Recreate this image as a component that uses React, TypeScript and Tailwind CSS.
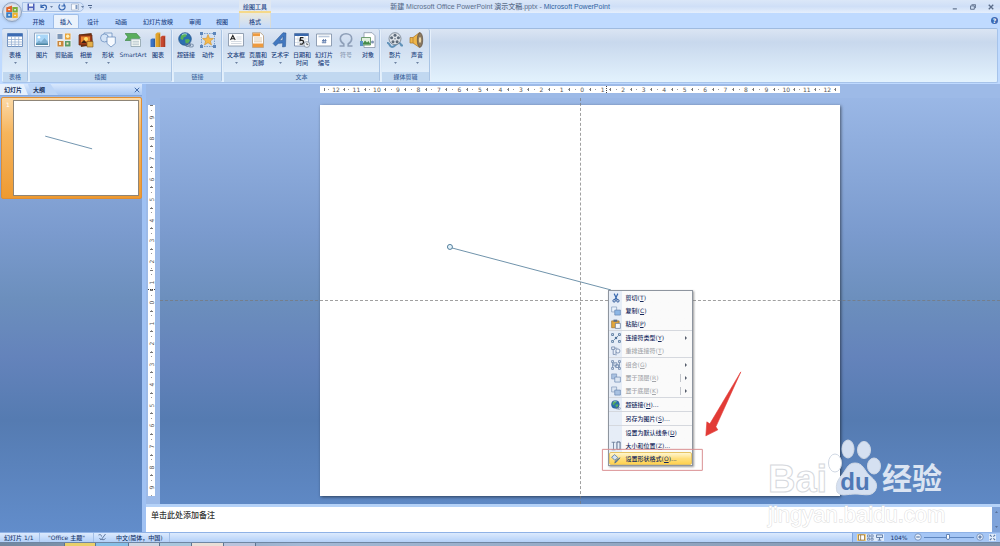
import type { ReactNode } from "react"

type Tool = { label: string; sub?: string; icon: ReactNode; arrow?: boolean; wide?: boolean; disabled?: boolean }
type ToolGroup = { name: string; pad: string; tools: Tool[] }
type MenuEntry = { label: string; hotkey: string; dots?: boolean; icon?: ReactNode; sub?: boolean; split?: boolean; disabled?: boolean; active?: boolean; line?: boolean }

const Icon = ({ children, size = "size-4" }: { children: ReactNode; size?: string }) => (
    <svg viewBox="0 0 16 16" className={`${size} shrink-0`} fill="none" aria-hidden="true">{children}</svg>
)

const Caret = () => (
    <svg viewBox="0 0 4 2" className="h-0.5 w-[3px]" aria-hidden="true"><path d="M0 0h4L2 2Z" fill="#4a6187" /></svg>
)

const globe = (
    <>
        <circle cx="7" cy="7" r="6.3" fill="#2b6fb0" stroke="#1f4f86" strokeWidth=".7" />
        <path d="M3 3.5 6 1.6l3 .6-1 2.2-2.4 1L5 8 2.4 7ZM7 7.5l3.5-.6 1.5 1.6-2.4 3.4-2-1Z" fill="#58b158" />
        <path d="M4 3c1.5-1.4 3.6-1.4 5-.8" stroke="#bfe3f7" strokeWidth=".8" />
        <ellipse cx="10" cy="12.7" rx="2.4" ry="1.5" stroke="#55708f" strokeWidth="1.1" />
        <ellipse cx="13" cy="13.5" rx="2.3" ry="1.5" stroke="#8296b0" strokeWidth="1.1" />
    </>
)

const groups: ToolGroup[] = [
    {
        name: "表格",
        pad: "px-px",
        tools: [
            {
                label: "表格", arrow: true,
                icon: <Icon><path d="M.5 1.5h15v13H.5Z" fill="#fff" stroke="#7393c0" /><path d="M.5 1.5h15v3H.5Z" fill="#3c6cb4" /><path d="M4.5 4.5v10M8 4.5v10M11.7 4.5v10M.5 7.5h15M.5 10h15M.5 12.3h15" stroke="#9bb2d3" strokeWidth=".8" /></Icon>,
            },
        ],
    },
    {
        name: "插图",
        pad: "pl-px pr-0.5",
        tools: [
            {
                label: "图片",
                icon: <Icon><path d="M.5 1h15v13.5H.5Z" fill="#f8fbff" stroke="#93a9c4" /><path d="M2 2.5h12V13H2Z" fill="#a9d6f7" /><circle cx="5" cy="5.3" r="1.3" fill="#fff" /><path d="m2 11 3-2.5 2 1.5 3.5-4L14 10v3H2Z" fill="#7fb0d2" /><path d="M2 11.5h12V13H2Z" fill="#4c85a0" /></Icon>,
            },
            {
                label: "剪贴画",
                icon: <Icon><path d="M.5.8h15v14.4H.5Z" fill="#e6eaf0" /><path d="M1.5 2h5v5h-5Z" fill="#7d97b7" /><path d="M9 1.5h5.5v6H9Z" fill="#e9a33b" /><circle cx="11.7" cy="4.2" r="1.7" fill="#fff1b8" /><path d="M1.5 9h6v5.5h-6Z" fill="#c9863d" /><path d="M9 9h5.5v5.5H9Z" fill="#5a9b6b" /><path d="M3 10h2v3H3ZM10.5 10.5h2v2h-2Z" fill="#f7e3c0" /></Icon>,
            },
            {
                label: "相册", arrow: true,
                icon: <Icon><path d="M1 2.5 13.5 1 15 13 3 15Z" fill="#6b3415" /><path d="M1 3h13v10H1Z" fill="#a03c18" stroke="#5b2a12" strokeWidth=".7" /><path d="M3 4.5h9V11H3Z" fill="#e8852d" /><circle cx="8" cy="7" r="2" fill="#ffdf68" /><path d="m3 11 3-3 3 3Z" fill="#3d2013" /><path d="M9 9.5h6v5.5H9Z" fill="#e4b04a" stroke="#79501e" strokeWidth=".6" /></Icon>,
            },
            {
                label: "形状", arrow: true,
                icon: <Icon><path d="M4 1h8v7H4Z" fill="#e5effa" stroke="#6d90bf" strokeWidth=".8" /><circle cx="4.5" cy="6" r="4" fill="#d3e3f6" stroke="#6d90bf" strokeWidth=".8" /><path d="M7 5h8.3v6.5L11 15 7 11.5Z" fill="#f5f9fe" stroke="#6d90bf" strokeWidth=".8" /></Icon>,
            },
            {
                label: "SmartArt", wide: true,
                icon: <Icon><path d="M0 1.5h11.5L15 5.5l-2 3H0l3-3.5Z" fill="#59ad5d" stroke="#347d3d" strokeWidth=".6" /><path d="M6 7h9.5v7.5H6Z" fill="#f7fbf7" stroke="#8ca0a9" strokeWidth=".8" /><path d="M7.5 9.3h6.5M7.5 11h6.5M7.5 12.7h6.5" stroke="#a2b5bf" strokeWidth=".7" /></Icon>,
            },
            {
                label: "图表",
                icon: <Icon><path d="M.5 7.5 2 6.5h3V15H.5Z" fill="#3a72c4" /><path d="m5.5 2 1.8-1.5h3V15H5.5Z" fill="#e3a42c" /><path d="m10.5 5 1.8-1.2h3V15h-4.8Z" fill="#c8482f" /><path d="M4.3 7v8M9.3 2v13M14.3 5v10" stroke="#0003" strokeWidth="1.2" /></Icon>,
            },
        ],
    },
    {
        name: "链接",
        pad: "pl-px pr-0.5",
        tools: [
            { label: "超链接", icon: <Icon>{globe}</Icon> },
            {
                label: "动作",
                icon: <Icon><path d="M1.5 1.5h13v13h-13Z" stroke="#7ba0cf" strokeDasharray="1.5 1" /><path d="m8 2.5 1.5 3.8 4 .2-3.1 2.5 1.1 4L8 10.7 4.5 13l1.1-4-3.1-2.5 4-.2Z" fill="#f6b94c" stroke="#c98820" strokeWidth=".5" /><path d="M0 0h3v3H0ZM13 0h3v3h-3ZM0 13h3v3H0ZM13 13h3v3h-3Z" fill="#5d86bb" /></Icon>,
            },
        ],
    },
    {
        name: "文本",
        pad: "pl-px",
        tools: [
            {
                label: "文本框", arrow: true,
                icon: <Icon><path d="M.5 1.5h15v12.5H.5Z" fill="#fdfdfe" stroke="#8a98ac" strokeWidth=".9" /><path d="M8.5 5h5M8.5 7h5M3 9.5h10.5M3 11.5h10.5" stroke="#c2cad6" strokeWidth=".7" /><path d="M2.5 8 4.8 3.5 7.2 8M3.3 6.7h3" stroke="#222" strokeWidth="1.1" /></Icon>,
            },
            {
                label: "页眉和", sub: "页脚",
                icon: <Icon><path d="M2.5.7h8l3 3v11.8h-11Z" fill="#fff" stroke="#b39672" strokeWidth=".8" /><path d="M3 1.2h7v3H3ZM3 11.5h10V15H3Z" fill="#ee9a3e" /><path d="M4 6h8M4 8h8M4 9.8h8" stroke="#d2b48c" strokeWidth=".7" /></Icon>,
            },
            {
                label: "艺术字", arrow: true,
                icon: <Icon><path d="M1 11.5 11 .7l3 .3-.5 13.500-3 .5.2-4-4.5.4L3.5 14ZM7.5 8.5l3.2-.2.4-4Z" fill="#4278c0" stroke="#24518f" strokeWidth=".5" /></Icon>,
            },
            {
                label: "日期和", sub: "时间",
                icon: <Icon><path d="M.5 1.5h14V14H.5Z" fill="#fff" stroke="#6e82a2" strokeWidth=".8" /><path d="M.5 1.5h14V4H.5Z" fill="#3968ad" /><path d="M1 7h13M1 10.5h13M4 4v10M11 4v10" stroke="#ccd5e2" strokeWidth=".7" /><path d="M9.5 5.7h-3L6 8.5c2.5-.7 4 .3 3.5 2s-2 2-3.8 1.3" stroke="#222" strokeWidth="1.3" /><circle cx="12.8" cy="12.5" r="2.9" fill="#edf1f6" stroke="#7b899b" strokeWidth=".8" /><path d="M12.8 10.8v1.8h1.5" stroke="#333" strokeWidth=".7" /></Icon>,
            },
            {
                label: "幻灯片", sub: "编号",
                icon: <Icon><path d="M.5 2h15v12H.5Z" fill="#fff" stroke="#8796ad" strokeWidth=".9" /><path d="M2.5 3.7h11v1.6h-11Z" fill="#bac8dc" /><path d="M7.5 7 7 11.5M9.5 7 9 11.500M6 8.500h4.500M5.800 10.200h4.500" stroke="#5f7cad" strokeWidth=".9" /></Icon>,
            },
            {
                label: "符号", disabled: true,
                icon: <Icon><path d="M1.5 14h4.3v-2C3.5 10.500 2.300 8.800 2.300 6.700 2.300 3.800 4.700 1.700 8 1.700s5.700 2.100 5.700 5c0 2.100-1.200 3.800-3.500 5.300v2h4.300" stroke="#8e9fb8" strokeWidth="1.600" /></Icon>,
            },
            {
                label: "对象",
                icon: <Icon><path d="M4 .7h8l3 3v11.8H4Z" fill="#fff" stroke="#8896a8" strokeWidth=".8" /><path d="M1.5 5.500h9V13h-9Z" fill="#e2f0df" stroke="#548a56" strokeWidth=".8" /><path d="m2 12.500 3-4 2 2 1.500-1.500 2 3.500Z" fill="#478c4b" /><path d="M0 9h3v5H0Z" fill="#5a94c8" /><circle cx="12.500" cy="10" r="1.500" fill="#7f95b5" /></Icon>,
            },
        ],
    },
    {
        name: "媒体剪辑",
        pad: "pl-0.5 pr-px",
        tools: [
            {
                label: "影片", arrow: true,
                icon: <Icon><path d="M0 11c3-1 2 4 5 4s4-4 7-4 1 4 4 2" stroke="#5f91b8" strokeWidth="2" /><circle cx="8" cy="6.7" r="6" fill="#dde2e8" stroke="#707d8c" strokeWidth=".8" /><circle cx="8" cy="3.2" r="1.5" fill="#5d6b7a" /><circle cx="4.6" cy="5.7" r="1.5" fill="#5d6b7a" /><circle cx="11.4" cy="5.7" r="1.5" fill="#5d6b7a" /><circle cx="6" cy="9.8" r="1.5" fill="#5d6b7a" /><circle cx="10.1" cy="9.8" r="1.5" fill="#5d6b7a" /><circle cx="8" cy="6.8" r=".7" fill="#5d6b7a" /></Icon>,
            },
            {
                label: "声音", arrow: true,
                icon: <Icon><path d="M1 5.5h3L10.5.5v15L4 11H1Z" fill="#eeb64a" stroke="#a8742a" strokeWidth=".7" /><path d="M4 5.5V11" stroke="#a8742a" strokeWidth=".6" /><ellipse cx="11" cy="8" rx="2.7" ry="7.3" fill="#8c7a61" stroke="#5e5040" strokeWidth=".7" /><ellipse cx="11" cy="8" rx="1.2" ry="3" fill="#e9d6a8" /></Icon>,
            },
        ],
    },
]

const boxes = (a: string, b: string) => (
    <Icon size="size-2.5"><path d="M1 1.5h8v8H1Z" fill={a} stroke="#7690b5" /><path d="M6 6.5h9v8H6Z" fill={b} stroke="#5f7fac" /></Icon>
)

const menu: MenuEntry[] = [
    { label: "剪切", hotkey: "T", icon: <Icon size="size-2.5"><path d="M5 1 10 11M11 1 6 11" stroke="#3a6ab0" strokeWidth="1.8" /><circle cx="5" cy="12.5" r="2" stroke="#2c5596" strokeWidth="1.5" /><circle cx="11" cy="12.5" r="2" stroke="#2c5596" strokeWidth="1.5" /></Icon> },
    { label: "复制", hotkey: "C", icon: boxes("#e9f1fb", "#8db7e6") },
    { label: "粘贴", hotkey: "P", line: true, icon: <Icon size="size-2.5"><path d="M1 3h12v11H1Z" fill="#e2a63c" stroke="#94682a" /><path d="M4 1h6v3.5H4Z" fill="#5b6c86" /><path d="M7 7h8v8H7Z" fill="#f4f7fc" stroke="#53698d" /></Icon> },
    { label: "连接符类型", hotkey: "Y", sub: true, icon: <Icon size="size-2.5"><path d="M1 1h3v3H1ZM12 1h3v3h-3ZM1 12h3v3H1ZM12 12h3v3h-3Z" stroke="#4e7097" strokeWidth="1.3" /><path d="m5 11 6-6" stroke="#4e7097" strokeWidth="1.3" /><circle cx="8" cy="8" r="2" fill="#4e7097" /></Icon> },
    { label: "重排连接符", hotkey: "T", disabled: true, line: true, icon: <Icon size="size-2.5"><path d="M1 1.5h5v4H1ZM3.5 5.5v8H7M6 3.5h4" stroke="#7389ab" strokeWidth="1.3" /><circle cx="11" cy="8" r="3.3" fill="#edf3fb" stroke="#7389ab" strokeWidth="1.3" /><path d="M8 9v6" stroke="#7389ab" strokeWidth="1.3" /></Icon> },
    { label: "组合", hotkey: "G", disabled: true, sub: true, icon: <Icon size="size-2.5"><path d="M1 1h3v3H1ZM12 1h3v3h-3ZM1 12h3v3H1ZM12 12h3v3h-3ZM4.5 4.5h5v5h-5ZM7.5 7.5H12V12H7.5ZM2.5 4.5v7M13.5 4.5v7" stroke="#6c86aa" strokeWidth="1.3" /></Icon> },
    { label: "置于顶层", hotkey: "R", disabled: true, sub: true, split: true, icon: boxes("#a9c2e2", "#dbe5f2") },
    { label: "置于底层", hotkey: "K", disabled: true, sub: true, split: true, line: true, icon: boxes("#dbe5f2", "#a9c2e2") },
    { label: "超链接", hotkey: "H", dots: true, line: true, icon: <Icon size="size-2.5">{globe}</Icon> },
    { label: "另存为图片", hotkey: "S", dots: true, line: true },
    { label: "设置为默认线条", hotkey: "D" },
    { label: "大小和位置", hotkey: "Z", dots: true, icon: <Icon size="size-2.5"><path d="M1 2h6M4 2v12M1 14h6" stroke="#5c6f8d" strokeWidth="1.2" /><path d="M9.5 1.5h5v12h-5Z" fill="#e7eef8" stroke="#46597a" strokeWidth="1.4" /></Icon> },
    { label: "设置形状格式", hotkey: "O", dots: true, active: true, icon: <Icon size="size-2.5"><path d="m1 5 5-4 5 5-5 4Z" fill="#d4e3f5" stroke="#56779f" strokeWidth="1.3" /><path d="M14.5 6 9 12.5 6 14.5l1-3.5Z" fill="#6b88ad" stroke="#41608a" /></Icon> },
]

const tabs = [
    { label: "开始", width: "w-[29px]" },
    { label: "插入", width: "w-[26px]", selected: true },
    { label: "设计", width: "w-7" },
    { label: "动画", width: "w-7" },
    { label: "幻灯片放映", width: "w-[46px]" },
    { label: "审阅", width: "w-7" },
    { label: "视图", width: "w-[26px]" },
]

const cmAcross = Array.from({ length: 25 }, (_, i) => Math.abs(i - 12))
const cmDown = Array.from({ length: 19 }, (_, i) => Math.abs(i - 9))

const TitleBar = () => (
    <header className="relative flex h-[13px] items-center bg-linear-to-b from-[#dbe7f8] via-[#cfdff7] to-[#e5effc] text-[#5b6f8c]">
        <button aria-label="Office 按钮" className="absolute top-0.5 left-0.5 z-10 size-5 rounded-full border border-[#8fa3c0] bg-radial from-white via-[#e3e7ee] to-[#a9b6ca] shadow-sm">
            <svg viewBox="0 0 16 16" className="mx-auto size-3.5" fill="none" strokeWidth="2.2">
                <path d="M2.5 3.5 7 2v5H2.5Z" stroke="#e0652b" />
                <path d="M9.5 3.500h4V7.500h-4Z" stroke="#7cae3b" />
                <path d="M2.500 9.500H7v4H2.500Z" stroke="#3c7fc4" />
                <path d="M9.500 10h4v3.500l-4 .5Z" stroke="#efb12e" />
            </svg>
        </button>
        <div className="ml-[22px] flex h-2.5 w-[62px] items-center gap-[5px] rounded-r-full border border-[#a9c2e6] bg-[#d6e4f8] pl-1">
            <button aria-label="保存"><Icon size="size-2"><path d="M1 1h14v14H1Z" fill="#4c5fb8" /><path d="M4 1h8v6H4Z" fill="#f2f5fb" /><path d="M4 10h8v5H4Z" fill="#cdd6ee" /></Icon></button>
            <button aria-label="撤消" className="flex items-center gap-0.5">
                <Icon size="size-2"><path d="M2 3v6h6M2.500 8.500C5 3 13 3 13 9c0 3-2 4.500-4 5" stroke="#3465b0" strokeWidth="2.4" /></Icon>
                <Caret />
            </button>
            <button aria-label="恢复"><Icon size="size-2"><path d="M4 3a6.2 6.2 0 1 0 8 0M12 1v5H7" stroke="#3465b0" strokeWidth="2.2" /></Icon></button>
            <button aria-label="新建幻灯片" className="flex items-center gap-0.5">
                <Icon size="size-2"><path d="M1 2h14v12H1Z" fill="#f8fafd" stroke="#7f93b1" /><path d="M9 4h4v8H9Z" fill="#7d98c0" /></Icon>
                <Caret />
            </button>
        </div>
        <button aria-label="自定义快速访问工具栏" className="ml-1 flex flex-col items-center gap-px">
            <span className="h-px w-1 bg-[#4a6187]" />
            <Caret />
        </button>
        <h1 className="absolute inset-x-0 text-center font-['Liberation_Sans','Noto_Sans_CJK_SC',sans-serif] text-[7px] leading-[13px]">
            新建 Microsoft Office PowerPoint 演示文稿.pptx - <span className="text-[#2f639f]">Microsoft PowerPoint</span>
        </h1>
        <div className="relative ml-auto flex items-center gap-3 pr-1.5">
            <button aria-label="最小化"><Icon size="size-1.5"><path d="M2 13h11" stroke="#5a6c88" strokeWidth="3" /></Icon></button>
            <button aria-label="还原"><Icon size="size-1.5"><path d="M4 2h11v9M1.5 5h10v9h-10Z" stroke="#5a6c88" strokeWidth="2.5" /></Icon></button>
            <button aria-label="关闭"><Icon size="size-1.5"><path d="m2 2 12 12M14 2 2 14" stroke="#5a6c88" strokeWidth="3.5" /></Icon></button>
        </div>
    </header>
)

const TabRow = () => (
    <nav className="flex h-[15px] items-end bg-[#bfdaff] pl-6 text-[#1f4788]">
        {tabs.map((tab) => (
            <button
                key={tab.label}
                className={tab.selected
                    ? `${tab.width} h-3.5 rounded-t-xs border border-b-0 border-[#9ebde8] bg-[#eaf2fc]`
                    : `${tab.width} h-3.5`}
            >
                {tab.label}
            </button>
        ))}
        <div className="relative ml-1 h-full w-8 border-x border-[#d9dcd8] bg-linear-to-b from-[#ece9dc] to-[#c5dbfb]">
            <span className="absolute -top-[13px] -left-px z-10 h-[13px] w-8 border-b-2 border-[#f5d98a] bg-[#e0e8f2] text-center leading-[13px]">绘图工具</span>
            <button className="h-full w-full pt-px">格式</button>
        </div>
        <button aria-label="帮助" className="mr-0.5 mb-1 ml-auto flex size-[7px] items-center justify-center rounded-full bg-[#3a68b4] text-[6px] font-bold text-white">?</button>
    </nav>
)

const Ribbon = () => (
    <section className="mx-0.5 flex h-[55px] gap-0.5 rounded-xs border border-l-0 border-[#a6c3ea] border-t-[#9fbbe0] bg-linear-to-b from-[#dbe5f3] from-0% via-[#c8d8ed] via-25% to-[#e3f2fd] pl-px text-[#1f4480]">
        {groups.map((group) => (
            <div key={group.name} className="flex flex-col justify-between rounded-xs border-r border-[#a9c4e4] bg-white/10 shadow-[1px_0_0_#e6f0fb]">
                <div className={`flex ${group.pad}`}>
                    {group.tools.map((tool) => (
                        <button
                            key={tool.label}
                            disabled={tool.disabled}
                            className={`${tool.wide ? "w-7" : "w-[22px]"} flex flex-col items-center pt-[3px] whitespace-nowrap disabled:text-[#8c9cb4]`}
                        >
                            {tool.icon}
                            <span className="mt-0.5 leading-[9px]">{tool.label}</span>
                            {tool.sub && <span className="leading-[8px]">{tool.sub}</span>}
                            {tool.arrow && <span className="mt-[3px]"><Caret /></span>}
                        </button>
                    ))}
                </div>
                <h2 className="h-2.5 bg-[#c1d8f0] text-center leading-[10px] font-medium text-[#44699f]">{group.name}</h2>
            </div>
        ))}
    </section>
)

const SlidesPane = () => (
    <aside className="flex w-[142px] shrink-0 flex-col">
        <div className="flex h-3 items-stretch border-b border-[#86a8dc] bg-linear-to-b from-[#d9e8fc] to-[#a9c8f4] text-[#16305c]">
            <button className="w-7 bg-[#e6f0fd] pl-1 text-left font-bold whitespace-nowrap [clip-path:polygon(0_0,84%_0,100%_100%,0_100%)]">幻灯片</button>
            <button className="w-[30px] bg-[#bcd5f7] pr-2 font-bold [clip-path:polygon(0_0,75%_0,100%_100%,12%_100%)]">大纲</button>
            <button aria-label="关闭窗格" className="mr-0.5 ml-auto"><Icon size="size-1.5"><path d="m2 2 12 12M14 2 2 14" stroke="#3e68a8" strokeWidth="2.5" /></Icon></button>
        </div>
        <button className="mt-px ml-px flex gap-0.5 rounded-xs border border-[#e08f33] bg-linear-to-b from-[#fbd9a6] from-0% via-[#f6b55c] via-35% to-[#ee9a30] p-0.5 text-left text-white">
            <span className="w-[7px] pl-0.5">1</span>
            <svg viewBox="0 0 127 96" className="flex-1 border border-[#8f8577] bg-white">
                <path d="m32 36 48 13" stroke="#6f93ae" />
            </svg>
        </button>
    </aside>
)

const HorizontalRuler = () => (
    <div className="relative mx-auto flex h-[7px] w-[62%] items-center bg-white px-1 text-[6px] leading-[7px] text-[#555]">
        {cmAcross.map((n, i) => (
            <div key={i} className="flex w-0 flex-1 items-center justify-between">
                <span className="h-[3px] w-px bg-[#777]" />
                <span className="size-px bg-[#999]" />
                <span>{n}</span>
                <span className="size-px bg-[#999]" />
            </div>
        ))}
        <span className="h-[3px] w-px bg-[#777]" />
        <span className="absolute left-[55%] h-full w-px border-l border-dotted border-[#444]" />
    </div>
)

const VerticalRuler = () => (
    <div className="flex w-3.5 shrink-0 flex-col bg-[#9cbae8] pt-[7px] pb-2 pl-0.5">
        <div className="relative flex w-[7px] flex-1 flex-col items-center bg-white text-[6px] leading-[7px] text-[#555]">
            {cmDown.map((n, i) => (
                <div key={i} className="flex h-0 flex-1 flex-col items-center justify-between">
                    <span className="h-px w-[3px] bg-[#777]" />
                    <span className="size-px bg-[#999]" />
                    <span className="-rotate-90">{n}</span>
                    <span className="size-px bg-[#999]" />
                </div>
            ))}
            <span className="absolute top-[47%] h-px w-full border-t border-dotted border-[#444]" />
        </div>
    </div>
)

const ContextMenu = () => (
    <ul role="menu" className="absolute top-[185px] left-[288px] w-[85px] border border-[#8e959f] bg-linear-to-r from-[#e6edf7] from-[13px] to-[#fafafa] to-[13px] font-medium text-[#14285c] shadow-[1px_1px_2px_#0006]">
        {menu.map((entry) => (
            <li key={entry.label} role="none" className={entry.line ? "border-b border-[#d5d8de]" : ""}>
                <button
                    role="menuitem"
                    disabled={entry.disabled}
                    className={`flex h-[13px] w-full items-center whitespace-nowrap disabled:text-[#a3a6ab] ${entry.active ? "rounded-xs border border-[#e5c365] bg-linear-to-b from-[#fff6cf] via-[#ffdf7c] to-[#ffd24f] pl-px" : "pl-0.5"}`}
                >
                    <span className="w-[15px]">{entry.icon}</span>
                    <span>{entry.label}(<u>{entry.hotkey}</u>){entry.dots && "..."}</span>
                    {entry.sub && (
                        <span className={`ml-auto flex h-2 items-center pr-[5px] ${entry.split ? "border-l border-[#c3c6cc] pl-1" : ""}`}>
                            <svg viewBox="0 0 2 4" className="h-1 w-0.5"><path d="M0 0v4l2-2Z" fill="#555c6b" /></svg>
                        </span>
                    )}
                </button>
            </li>
        ))}
    </ul>
)

const Watermark = () => (
    <div className="pointer-events-none absolute right-[54px] bottom-2 z-10 flex h-[58px] w-[178px] items-end font-['Liberation_Sans','Noto_Sans_CJK_SC',sans-serif] font-bold text-[#dbe4f2]">
        <span className="w-[60px] text-[38px] leading-[34px] text-white [-webkit-text-stroke:1px_#d5d8dd]">Bai</span>
        <div className="relative h-[58px] w-[54px]">
            <svg viewBox="0 0 54 58" className="absolute inset-0" fill="#d5e0f1" stroke="#d0d8e4">
                <ellipse cx="7" cy="25" rx="6.5" ry="9" fill="#fff" />
                <ellipse cx="20" cy="11" rx="6" ry="9" />
                <ellipse cx="36" cy="12" rx="6.5" ry="8.5" />
                <ellipse cx="46" cy="28" rx="6.5" ry="8" />
                <path d="M27 25c8 0 9 7 14 12 6 5 10 9 6 16-4 6-12 3-20 3s-14 3-18-2c-2-8 1-12 4-16 5-5 6-13 14-13Z" />
            </svg>
            <span className="absolute inset-x-0 bottom-0 text-center text-[24px] leading-[28px] text-[#4f78b5]">du</span>
        </div>
        <span className="text-[30px] leading-[34px] whitespace-nowrap">经验</span>
    </div>
)

const Slide = () => (
    <div className="relative aspect-4/3 w-[62%] bg-white shadow-[1px_1px_3px_#0008]">
        <svg viewBox="0 0 521 391" className="absolute inset-0" fill="none">
            <path d="m132 143 159 42" stroke="#6f93ab" />
            <circle cx="130" cy="142" r="2.5" fill="#e4f3fb" stroke="#527d9b" />
        </svg>
        <ContextMenu />
        <svg viewBox="0 0 521 391" className="pointer-events-none absolute inset-0" fill="none">
            <path d="m421 267-25 55 2 3-12 6 1-14 3 2Z" fill="#e23b36" stroke="#e23b36" strokeWidth=".6" />
            <path d="M282.500 344.500h100v21h-100Z" stroke="#d98f92" />
        </svg>
    </div>
)

const Editor = () => (
    <div className="flex min-w-0 flex-1 flex-col border-l-4 border-[#9fc1f3]">
        <div className="h-3.5 bg-[#9dbae7] pt-0.5 pl-3.5"><HorizontalRuler /></div>
        <div className="relative flex flex-1">
            <VerticalRuler />
            <div className="relative flex flex-1 items-start justify-center pt-[7px] pb-2">
                <Slide />
                <span className="pointer-events-none absolute inset-y-0 left-1/2 border-l border-dashed border-[#777]/70" />
                <span className="pointer-events-none absolute top-[202px] left-0 w-[448px] border-t border-dashed border-[#777]/70" />
                <span className="pointer-events-none absolute top-[202px] right-0 left-[533px] border-t border-dashed border-[#777]/70" />
            </div>
            <Watermark />
        </div>
        <div className="relative flex h-7 border-t-3 border-[#b5d2f8]">
            <textarea aria-label="备注" defaultValue="单击此处添加备注" className="flex-1 resize-none overflow-hidden bg-white px-[5px] pt-[3px] text-[8px] leading-[12px] text-[#333] outline-none" />
            <div className="flex w-2 flex-col items-center justify-between bg-[#7fa3da] py-1">
                <span className="rotate-180 leading-none"><Caret /></span>
                <Caret />
            </div>
            <span className="pointer-events-none absolute -top-1 right-[54px] w-[178px] font-['Liberation_Sans',sans-serif] text-[22px] leading-6 text-white [-webkit-text-stroke:1px_#dcdcdc] [paint-order:stroke]">jingyan.baidu.com</span>
        </div>
    </div>
)

const StatusBar = () => (
    <footer className="flex h-2.5 items-center border-t border-[#8fb2e6] bg-linear-to-b from-[#dceafd] to-[#b3d0f8] text-[#16356a]">
        <span className="w-10 border-r border-[#a3bfe6] pl-1">幻灯片 1/1</span>
        <span className="w-[54px] border-r border-[#a3bfe6] pl-2">"Office 主题"</span>
        <button aria-label="拼写检查" className="mx-1"><Icon size="size-2"><path d="M1 4c4-2 6 0 6 3M3 10l3 4 9-12M8 13c3 1 5 0 7-2" stroke="#566f97" strokeWidth="1.8" /></Icon></button>
        <span className="border-r border-[#a3bfe6] px-1.5">中文(简体，中国)</span>
        <div className="ml-auto flex h-full items-center border-l border-[#7ea3dc] bg-[#a5c6f5] pl-1">
            <button aria-label="普通视图" className="bg-[#f8d27d] px-px"><Icon size="size-[7px]"><path d="M1 2h14v12H1ZM6 2v12" fill="#fff" stroke="#8b6a34" strokeWidth="1.8" /></Icon></button>
            <button aria-label="幻灯片浏览" className="bg-[#dfebfb] px-px"><Icon size="size-[7px]"><path d="M1 2h5v5H1ZM9 2h5v5H9ZM1 10h5v4H1ZM9 10h5v4H9Z" stroke="#54719d" strokeWidth="1.6" /></Icon></button>
            <button aria-label="幻灯片放映" className="bg-[#dfebfb] px-px"><Icon size="size-[7px]"><path d="M1 2h14v6H1ZM8 8v6M4 14h8" stroke="#54719d" strokeWidth="2" /></Icon></button>
            <span className="w-[30px] text-center">104%</span>
            <button aria-label="缩小"><Icon size="size-2"><circle cx="8" cy="8" r="6.5" fill="#e9f1fc" stroke="#6484b4" strokeWidth="1.6" /><path d="M4.500 8h7" stroke="#3f6298" strokeWidth="2" /></Icon></button>
            <input aria-label="显示比例" type="range" min="0" max="100" defaultValue="48" className="mx-0.5 h-px w-[50px] appearance-none bg-[#5f86bf] [&::-webkit-slider-thumb]:h-1.5 [&::-webkit-slider-thumb]:w-1 [&::-webkit-slider-thumb]:appearance-none [&::-webkit-slider-thumb]:rounded-b-full [&::-webkit-slider-thumb]:border [&::-webkit-slider-thumb]:border-[#6484b4] [&::-webkit-slider-thumb]:bg-white" />
            <button aria-label="放大"><Icon size="size-2"><circle cx="8" cy="8" r="6.5" fill="#e9f1fc" stroke="#6484b4" strokeWidth="1.6" /><path d="M4.500 8h7M8 4.500v7" stroke="#3f6298" strokeWidth="2" /></Icon></button>
            <button aria-label="适应窗口" className="mr-1 ml-[5px] bg-[#e2edfb]"><Icon size="size-[7px]"><path d="m2 2 4 4M14 2l-4 4M2 14l4-4M14 14l-4-4" stroke="#54719d" strokeWidth="2.4" /></Icon></button>
        </div>
    </footer>
)

const Taskbar = () => (
    <div className="flex h-[5px] items-end overflow-hidden border-t border-[#6f86a3] bg-linear-to-r from-[#71879f] from-0% via-[#a3b9d6] via-30% to-[#7f93ad] pl-16">
        <span className="h-1 w-8 border-x border-[#5f7490] bg-[#e9cf6a]" />
        <span className="h-1 w-8 bg-[#86bfe6]" />
        <span className="h-1 w-8 border-x border-[#5f7490] bg-[#cdd6e2]" />
        <span className="h-1 w-8 border-r border-[#5f7490] bg-[#a8c6dc]" />
        <span className="h-1 w-8 border-r border-[#5f7490] bg-[#e9ded6]" />
        <span className="h-1 w-8 border-r border-[#5f7490] bg-[#b9c3dc]" />
    </div>
)

export default function App() {
    return (
        <div className="flex min-h-screen flex-col bg-[#bfdaff] font-['DejaVu_Sans','Noto_Sans_CJK_SC',sans-serif] text-[6px] leading-[9px] font-medium">
            <TitleBar />
            <TabRow />
            <Ribbon />
            <main className="mt-px flex flex-1 bg-[linear-gradient(#9dbae8,#7b9bce_33%,#6c8fbd_48%,#6483bb_61%,#557bb1_75%,#628dcb)]">
                <SlidesPane />
                <Editor />
            </main>
            <StatusBar />
            <Taskbar />
        </div>
    )
}
